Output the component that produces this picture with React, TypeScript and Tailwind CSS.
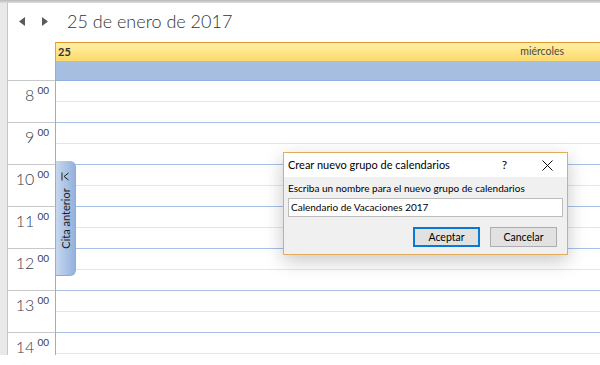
import React from "react";

const hours = ["8", "9", "10", "11", "12", "13", "14"];
const ui = { fontFamily: 'Lato, "Noto Sans", Arial, sans-serif' };

function Arrow({ dir }: { dir: "left" | "right" }) {
  return (
    <svg width="6" height="9" viewBox="0 0 6 9">
      {dir === "left" ? <polygon points="6,0 6,9 0,4.5" fill="#5a5a5a" /> : <polygon points="0,0 0,9 6,4.5" fill="#5a5a5a" />}
    </svg>
  );
}

function CitaTab() {
  return (
    <div className="absolute left-[56px] top-[161px] flex h-[115px] w-[20px] flex-col items-center rounded-r-[6px] border-r border-b border-[#8eaad6] bg-gradient-to-r from-[#c7d7ef] to-[#94b2dd]">
      <svg className="mt-[11px]" width="9" height="9" viewBox="0 0 9 9">
        <path d="M1 0.5V8.5" stroke="#222" strokeWidth="1" />
        <path d="M7.5 1L3 4.5L7.5 8" stroke="#222" strokeWidth="1" fill="none" />
      </svg>
      <div className="flex flex-1 items-center justify-center pb-[20px]">
        <span className="block -rotate-90 whitespace-nowrap text-[11px] leading-none text-[#1d1d1d]" style={ui}>
          Cita anterior
        </span>
      </div>
    </div>
  );
}

function Dialog() {
  return (
    <div
      className="absolute left-[283px] top-[152px] flex h-[103px] w-[285px] flex-col border border-[#e2ac5e] bg-[#f0f0f0] shadow-[0_6px_18px_rgba(0,0,0,0.22)]"
      style={ui}
    >
      <div className="flex h-[24px] shrink-0 items-center bg-white pl-[4px] text-[11px] text-black">
        <span className="flex-1">Crear nuevo grupo de calendarios</span>
        <span className="mr-[35px] text-[12px]">?</span>
        <svg className="mr-[14px]" width="11" height="11" viewBox="0 0 11 11">
          <path d="M0.5 0.5L10.5 10.5M10.5 0.5L0.5 10.5" stroke="#111" strokeWidth="1" />
        </svg>
      </div>
      <div className="flex flex-1 flex-col px-[4px]">
        <div className="mt-[4px] whitespace-nowrap text-[10px] leading-[14px] text-black">Escriba un nombre para el nuevo grupo de calendarios</div>
        <div className="mt-[3px] flex h-[19px] w-[275px] items-center border border-[#bcbcbc] bg-white pl-[2px] text-[10px] text-black">
          Calendario de Vacaciones 2017
        </div>
        <div className="mt-[10px] flex justify-end gap-[10px] pr-[6px]">
          <button className="h-[20px] w-[67px] border-2 border-[#0a78d6] bg-[#e1e1e1] text-[10.5px] leading-none text-black">Aceptar</button>
          <button className="h-[20px] w-[67px] border border-[#adadad] bg-[#e1e1e1] text-[10.5px] leading-none text-black">Cancelar</button>
        </div>
      </div>
    </div>
  );
}

export default function App() {
  return (
    <div className="relative h-[365px] w-[600px] overflow-hidden bg-white">
      <div className="flex h-[355px] flex-col overflow-hidden">
        <div className="h-[3px] shrink-0 bg-gradient-to-b from-[#b9b9b9] to-[#dedede]" />
        <div className="flex min-h-0 flex-1">
          <div className="w-[8px] shrink-0 border-r border-[#c6c6c6] bg-[#e9e9e9]" />
          <div className="flex min-w-0 flex-1 flex-col">
            {/* header */}
            <div className="flex h-[39px] shrink-0 items-center pb-[2px]">
              <div className="ml-[11px] flex items-center gap-[17px]">
                <Arrow dir="left" />
                <Arrow dir="right" />
              </div>
              <div className="ml-[19px] text-[18px] font-light text-[#333]" style={ui}>
                25 de enero de 2017
              </div>
            </div>
            <div className="flex shrink-0">
              {/* time ruler */}
              <div className="w-[47px] shrink-0">
                <div className="h-[39px] border-b border-[#c8c8c8]" />
                {hours.map((h) => (
                  <div key={h} className="flex h-[42px] justify-end border-b border-[#c8c8c8] pr-[6px] pt-[6px] text-[#3a4150]" style={ui}>
                    <span className="text-[16px] font-light leading-none">{h}</span>
                    <span className="ml-[3px] mt-[-2px] text-[10px] leading-none">00</span>
                  </div>
                ))}
              </div>
              {/* day column */}
              <div className="min-w-0 flex-1 border-l border-[#e6a33e]">
                <div className="flex h-[19px] items-center justify-between border-t border-[#e69a2e] bg-gradient-to-b from-[#fff0a4] to-[#fdd96a] pl-[2px] pr-[36px] text-[11px] text-[#333]" style={ui}>
                  <span className="font-bold">25</span>
                  <span className="text-[10.5px] text-[#4a4a4a]">miércoles</span>
                </div>
                <div className="h-[20px] border-b border-[#8fb0e0] bg-[#a6bfe0]" />
                {hours.map((h) => (
                  <div key={h} className="h-[42px] border-b border-[#a7c0e6]">
                    <div className="h-[21px] border-b border-[#e2e5ee]" />
                  </div>
                ))}
              </div>
            </div>
          </div>
        </div>
      </div>
      <CitaTab />
      <Dialog />
    </div>
  );
}
